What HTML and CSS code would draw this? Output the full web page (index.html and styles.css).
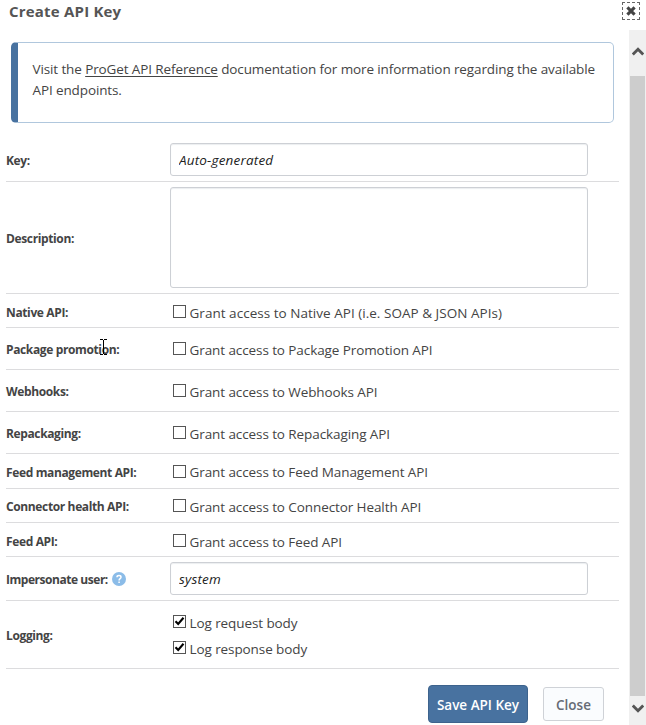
FILE: index.html
```
<!DOCTYPE html>
<html lang="en">
<head>
<meta charset="utf-8">
<title>Create API Key</title>
<link rel="stylesheet" href="styles.css">
</head>
<body>
<div class="dialog">
  <header class="title-bar">
    <h1>Create API Key</h1>
    <button class="dismiss" aria-label="Dismiss"><svg width="10" height="10" viewBox="0 0 10 10"><path d="M1.4 1.4 8.6 8.6M8.6 1.4 1.4 8.6" stroke="#444" stroke-width="3.1"/></svg></button>
  </header>
  <div class="body">
    <main class="content">
      <div class="info"><p>Visit the <a>ProGet API Reference</a> documentation for more information regarding the available<br>API endpoints.</p></div>
      <div class="form">
        <div class="row h44"><div class="label">Key:</div><input class="text" type="text" value="Auto-generated"></div>
        <div class="row h112"><div class="label">Description:</div><textarea class="text area"></textarea></div>
        <div class="row h34 low"><div class="label">Native API:</div><label class="check"><i class="box"></i><span class="native">Grant access to Native API (i.e. SOAP &amp; JSON APIs)</span></label></div>
        <div class="row h42"><div class="label promo">Package promotion:<svg class="cursor" width="8" height="16" viewBox="0 0 8 16"><path d="M0 .5H3M4 .5H7M3.5 1V15M0 15.5H3M4 15.5H7" stroke="#000" fill="none"/></svg></div><label class="check"><i class="box"></i><span>Grant access to Package Promotion API</span></label></div>
        <div class="row h42"><div class="label">Webhooks:</div><label class="check"><i class="box"></i><span>Grant access to Webhooks API</span></label></div>
        <div class="row h42"><div class="label">Repackaging:</div><label class="check"><i class="box"></i><span>Grant access to Repackaging API</span></label></div>
        <div class="row h35"><div class="label">Feed management API:</div><label class="check"><i class="box"></i><span>Grant access to Feed Management API</span></label></div>
        <div class="row h34"><div class="label">Connector health API:</div><label class="check"><i class="box"></i><span>Grant access to Connector Health API</span></label></div>
        <div class="row h34 low"><div class="label">Feed API:</div><label class="check"><i class="box"></i><span>Grant access to Feed API</span></label></div>
        <div class="row h44"><div class="label user">Impersonate user:<svg class="help" width="14" height="14" viewBox="0 0 14 14"><circle cx="7" cy="7" r="7" fill="#8bbce8"/><path d="M5 5.2C5 3 9 3 9 5.2 9 6.7 7.1 6.6 7.1 8.4M7.1 9.4V11" fill="none" stroke="#fff" stroke-width="1.5"/></svg></div><input class="text" type="text" value="system"></div>
        <div class="row h68"><div class="label">Logging:</div><div class="checks">
          <label class="check"><i class="box"><svg width="11" height="11" viewBox="0 0 11 11"><path d="M1.5 5.2 4.2 8 9.5 1.8" fill="none" stroke="#000" stroke-width="2.1"/></svg></i><span>Log request body</span></label>
          <label class="check"><i class="box"><svg width="11" height="11" viewBox="0 0 11 11"><path d="M1.5 5.2 4.2 8 9.5 1.8" fill="none" stroke="#000" stroke-width="2.1"/></svg></i><span>Log response body</span></label>
        </div></div>
      </div>
      <footer class="actions"><button class="save">Save API Key</button><button class="close">Close</button></footer>
    </main>
    <div class="scrollbar">
      <svg width="12" height="9" viewBox="0 0 12 9"><path d="M.8 7.5 6 2.2 11.2 7.5" fill="none" stroke="#555" stroke-width="2.8"/></svg>
      <div class="thumb"></div>
      <svg width="12" height="9" viewBox="0 0 12 9"><path d="M.8 1.5 6 6.8 11.2 1.5" fill="none" stroke="#555" stroke-width="2.8"/></svg>
    </div>
  </div>
</div>
</body>
</html>
```
FILE: styles.css
```
* { box-sizing: border-box; }
body { margin: 0; background: #fff; color: #444; font: 14px/21px "Open Sans", "Noto Sans", sans-serif; }
button, input, textarea { font: inherit; margin: 0; }
.dialog { width: 646px; height: 725px; display: flex; flex-direction: column; overflow: hidden; }
.title-bar { height: 30px; flex: none; display: flex; justify-content: space-between; align-items: flex-start; padding: 2px 6px 0 9px; }
h1 { margin: 0; font-size: 15px; line-height: 18px; font-weight: 700; letter-spacing: .2px; color: #555; }
.dismiss { width: 18px; height: 18px; padding: 0; border: 1px dashed #666; background: #fff; display: flex; align-items: center; justify-content: center; }
.dismiss svg { flex: none; }
.body { flex: 1; display: flex; min-height: 0; }
.content { width: 629px; padding: 12px 0 0 6px; }
.info { width: 603px; height: 81px; margin-left: 5px; border: 1px solid #b0c7dd; border-left: 7px solid #4872a0; border-radius: 5px; padding: 16px 0 0 14.5px; }
.info p { margin: 0; font-size: 13.5px; letter-spacing: -.115px; white-space: nowrap; }
.info a { text-decoration: underline; text-underline-offset: 2px; }
.form { width: 613px; margin-top: 15px; }
.row { display: flex; align-items: center; border-bottom: 1px solid #dcdcde; }
.h34 { height: 34px; } .h35 { height: 35px; } .h42 { height: 42px; } .h44 { height: 44px; } .h68 { height: 68px; } .h112 { height: 112px; }
.low { padding-top: 2px; }
.label { width: 164px; flex: none; font-size: 12px; font-weight: 700; letter-spacing: -.37px; display: flex; align-items: center; padding-top: 2px; white-space: nowrap; position: relative; }
.user { letter-spacing: -.46px; }
.help { margin-left: 4px; margin-top: -2px; }
.cursor { position: absolute; left: 94px; top: 2px; }
.text { display: block; width: 418px; height: 33px; border: 1px solid #cdd0d5; border-radius: 3px; padding: 0 8px; background: #fff; color: #222; font-style: italic; font-size: 13.5px; letter-spacing: .18px; box-shadow: inset 0 1px 1px #eceef0; outline: none; }
.area { height: 101px; resize: none; }
.check { display: flex; align-items: center; height: 21px; margin-left: 3px; font-size: 13.5px; letter-spacing: -.09px; white-space: nowrap; }
.check span { margin-left: 3.5px; padding-top: 3px; }
.check .native { letter-spacing: .03px; }
.box { width: 13px; height: 13px; border: 1px solid #555; display: block; background: #fff; flex: none; }
.box svg { display: block; }
.checks { display: flex; flex-direction: column; gap: 5px; }
.actions { display: flex; align-items: flex-start; padding: 16px 0 0 422px; }
.save { width: 100px; height: 38px; padding: 2px 0 0; border: 1px solid #3d638d; border-radius: 4px; background: #4872a0; color: #fff; font-size: 13.5px; font-weight: 600; white-space: nowrap; }
.close { width: 61px; height: 34px; margin: 2px 0 0 15px; padding: 2px 0 0; border: 1px solid #cfd2d7; border-radius: 3px; background: #fafcfe; color: #666b75; font-size: 13.5px; font-weight: 600; }
.scrollbar { width: 17px; background: #f0f0f0; display: flex; flex-direction: column; align-items: center; padding-top: 17px; }
.thumb { width: 15px; height: 620px; margin: 20px 0 8px; background: #cdcdcd; flex: none; }
.scrollbar svg { flex: none; }
```
